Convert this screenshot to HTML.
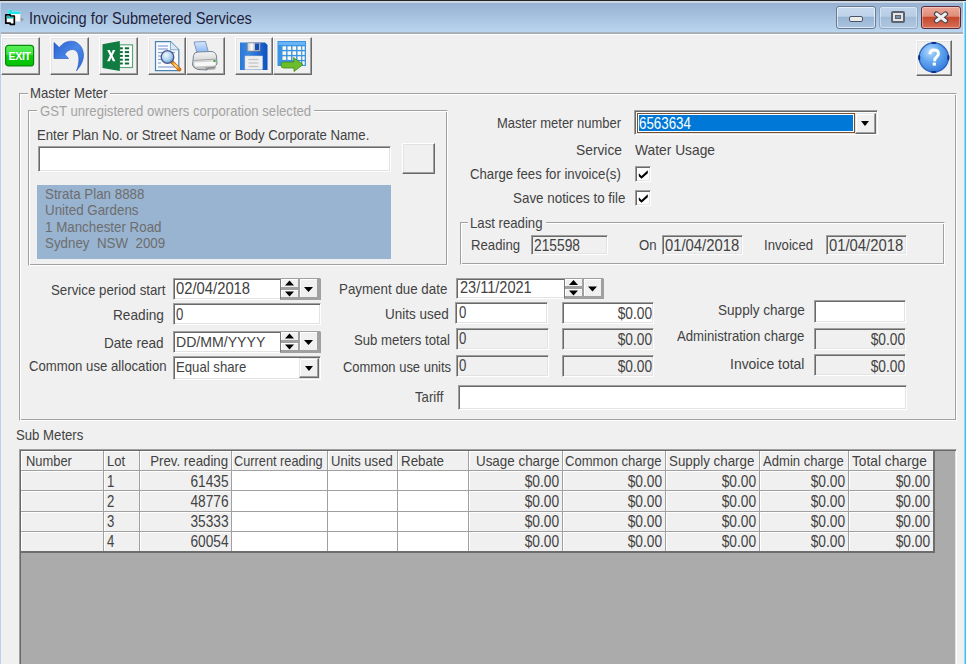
<!DOCTYPE html>
<html><head><meta charset="utf-8">
<style>
*{margin:0;padding:0;box-sizing:border-box}
html,body{width:966px;height:664px;overflow:hidden;background:#f0f0f0;position:relative;font-family:"Liberation Sans",sans-serif}
.a{position:absolute}
.t{position:absolute;margin-left:-1px;white-space:nowrap;font-size:15px;line-height:16px;transform:scaleX(.878);transform-origin:0 0;color:#424242}
.g{color:#6d6d6d}
.btn{position:absolute;width:39px;height:38px;background:#f0f0f0;border-style:solid;border-width:1px;border-color:#fff #696969 #696969 #fff;box-shadow:inset -1px -1px 0 #a0a0a0,inset 1px 1px 0 #e3e3e3}
.sunk{position:absolute;background:#fff;border-style:solid;border-width:1px;border-color:#a0a0a0 #fff #fff #a0a0a0;box-shadow:inset 1px 1px 0 #696969,inset -1px -1px 0 #e3e3e3}
.dis{background:#f0f0f0}
.grp{position:absolute;border-style:solid;border-width:1px;border-color:#a0a0a0 #fff #fff #a0a0a0;box-shadow:inset 1px 1px 0 #fff,inset -1px -1px 0 #a0a0a0}
.cap{background:#f0f0f0;padding:0 2px}
.ddb{position:absolute;width:19px;background:#f0f0f0;border-style:solid;border-width:1px;border-color:#e3e3e3 #696969 #696969 #e3e3e3;box-shadow:inset -1px -1px 0 #a0a0a0,inset 1px 1px 0 #fff}
.ddb:after{content:"";position:absolute;left:4.5px;top:50%;margin-top:-2.5px;border-left:4.5px solid transparent;border-right:4.5px solid transparent;border-top:5px solid #000}
.chk{position:absolute;width:16px;height:16px;background:#fff;border-style:solid;border-width:1px;border-color:#a0a0a0 #fff #fff #a0a0a0;box-shadow:inset 1px 1px 0 #696969,inset -1px -1px 0 #e3e3e3}
.spin{position:absolute;width:19px;height:18px}
.spin:before{content:"";position:absolute;left:0;top:0;width:19px;height:50%;box-sizing:border-box;background:#f0f0f0;border-style:solid;border-width:1px;border-color:#fff #a0a0a0 #a0a0a0 #fff}
.spin:after{content:"";position:absolute;left:0;bottom:0;width:19px;height:50%;box-sizing:border-box;background:#f0f0f0;border-style:solid;border-width:1px;border-color:#fff #a0a0a0 #a0a0a0 #fff}
.ddb2{position:absolute;width:19px;background:#f0f0f0;border-style:solid;border-width:1px;border-color:#fff #a0a0a0 #a0a0a0 #fff}
.r{transform-origin:100% 0}
</style></head><body>

<!-- Title bar -->
<div class="a" style="left:0;top:0;width:966px;height:1px;background:#262626"></div>
<div class="a" style="left:0;top:1px;width:963px;height:2px;background:#cfd8e2"></div>
<div class="a" style="left:0;top:3px;width:963px;height:29px;background:linear-gradient(#97b2d2,#b9d5ef)"></div>
<div class="a" style="left:0;top:32px;width:963px;height:2px;background:linear-gradient(#a7b6c6,#a9a9a9)"></div>
<div class="a" style="left:0;top:34px;width:963px;height:1px;background:#fff"></div>
<div class="a" style="left:0;top:3px;width:1px;height:661px;background:#b9d1ea"></div>
<div class="a" style="left:963px;top:2px;width:1px;height:662px;background:#e6eef6"></div>
<div class="a" style="left:964px;top:2px;width:1px;height:662px;background:#9ed6f2"></div>
<div class="a" style="left:965px;top:2px;width:1px;height:662px;background:#3cc4f0"></div>

<!-- title icon -->
<svg class="a" style="left:0;top:4px" width="28" height="24" viewBox="0 0 28 24">
  <path d="M8.3 5.8 L12 5.8 L12 7.5 L20.3 7.5 L20.3 17.5 L8.3 17.5Z" fill="#fbfbfb"/>
  <path d="M8.3 5.8 L12 5.8 L12 7.5 L20.3 7.5 L20.3 10 L8.3 10 Z" fill="#22e4e8"/>
  <path d="M20.8 13.3 L24 15.5 L20.8 17.8Z" fill="#9a9a9a"/>
  <path d="M5.8 10.8 L10.2 10.8 L10.2 12 L14.3 12 L14.3 20.3 L10.2 20.3 L10.2 19.2 L5.8 19.2 Z" fill="#fff" stroke="#000" stroke-width="1.7" stroke-linejoin="round"/>
  <path d="M6.7 11.7 L9.6 11.7 L9.6 12.9 L13.4 12.9 L13.4 14.4 L6.7 14.4Z" fill="#18b8b8"/>
</svg>
<div class="t" style="left:29.5px;top:10.2px;font-size:16.5px;transform:scaleX(.887);color:#1e1e3c">Invoicing for Submetered Services</div>
<!-- caption buttons -->
<div class="a" style="left:836px;top:6px;width:40px;height:23px;border:1px solid #6a7a8e;border-radius:3px;background:linear-gradient(#c8daed 0%,#bdd2ea 45%,#98b4d2 46%,#a9c4e0 100%);box-shadow:inset 0 0 0 1px rgba(255,255,255,.6)"></div>
<div class="a" style="left:849px;top:16.3px;width:14px;height:6.2px;border:1.4px solid #4a5568;border-radius:2px;background:#ececec"></div>
<div class="a" style="left:879px;top:6px;width:39px;height:23px;border:1px solid #90a8c4;border-radius:3px;background:linear-gradient(#c0d4ea 0%,#b8cee6 45%,#a0bad6 46%,#b0c8e2 100%);box-shadow:inset 0 0 0 1px rgba(255,255,255,.4)"></div>
<div class="a" style="left:891px;top:11px;width:14px;height:12px;border:2px solid #5c6270;border-radius:2px;background:#e4e4e4"></div>
<div class="a" style="left:895px;top:15px;width:6px;height:4px;background:#7890ac;border:1px solid #5c6270"></div>
<div class="a" style="left:921px;top:6px;width:40px;height:23px;border:1px solid #5a2a3a;border-radius:3px;background:linear-gradient(#eca898 0%,#e08c78 45%,#c44428 46%,#d87058 100%);box-shadow:inset 0 0 0 1px rgba(255,255,255,.35)"></div>
<svg class="a" style="left:932px;top:9px" width="18" height="18" viewBox="0 0 18 18">
  <g stroke-linecap="round"><path d="M4.5 5 L13.5 11.8 M13.5 5 L4.5 11.8" stroke="#4a4450" stroke-width="5.2"/>
  <path d="M4.6 5.1 L13.4 11.7 M13.4 5.1 L4.6 11.7" stroke="#f0f0f0" stroke-width="3.1"/></g>
</svg>

<!-- toolbar -->
<div class="btn" style="left:1px;top:37px"></div>
<div class="btn" style="left:50px;top:37px"></div>
<div class="btn" style="left:99px;top:37px"></div>
<div class="btn" style="left:148px;top:37px;width:38px"></div>
<div class="btn" style="left:186px;top:37px"></div>
<div class="btn" style="left:235px;top:37px;width:38px"></div>
<div class="btn" style="left:273px;top:37px"></div>
<div class="btn" style="left:916px;top:40px;width:36px;height:36px"></div>
<!-- EXIT icon -->
<svg class="a" style="left:4px;top:44px" width="32" height="24" viewBox="0 0 32 24">
  <defs><linearGradient id="gx" x1="0" y1="0" x2="0" y2="1"><stop offset="0" stop-color="#58f058"/><stop offset=".45" stop-color="#40e040"/><stop offset=".5" stop-color="#10c810"/><stop offset="1" stop-color="#00c400"/></linearGradient></defs>
  <rect x="1.6" y="1.3" width="28" height="20.6" rx="3" fill="url(#gx)" stroke="#0a8a0a" stroke-width="1.2"/>
  <text x="15.6" y="15.6" text-anchor="middle" font-family="Liberation Sans" font-weight="bold" font-size="10.5" fill="#fff" letter-spacing="-.3">EXIT</text>
</svg>
<!-- undo icon -->
<svg class="a" style="left:50px;top:38px" width="38" height="36" viewBox="0 0 38 36">
  <defs><linearGradient id="gu" x1="0" y1="0" x2="1" y2="1"><stop offset="0" stop-color="#2a60d0"/><stop offset=".5" stop-color="#4a88e8"/><stop offset="1" stop-color="#2a6ad8"/></linearGradient></defs>
  <path d="M4,4.5 L4,20.5 L18.5,20.5 L14.8,16.3 C17.5,11.5 23.5,9.8 26.8,13.5 C29.8,17 29.5,26 26.5,32.8 C31.5,27 34,21 33.4,15.5 C32.6,8 27,3.2 21.5,3.2 C16,3.2 12,6 9.3,9.6 Z" fill="url(#gu)" stroke="#2050b8" stroke-width=".6"/>
</svg>
<!-- excel icon -->
<svg class="a" style="left:99px;top:38px" width="38" height="36" viewBox="0 0 38 36">
  <rect x="20.5" y="6.8" width="13" height="22.7" fill="#fff" stroke="#5aa878" stroke-width="1.2"/>
  <g fill="#0b6e35">
    <rect x="21" y="9.3" width="2.8" height="2"/><rect x="25.8" y="9.3" width="4.3" height="2"/>
    <rect x="21" y="13.1" width="2.8" height="2"/><rect x="25.8" y="13.1" width="4.3" height="2"/>
    <rect x="21" y="16.9" width="2.8" height="2"/><rect x="25.8" y="16.9" width="4.3" height="2"/>
    <rect x="21" y="20.7" width="2.8" height="2"/><rect x="25.8" y="20.7" width="4.3" height="2"/>
    <rect x="21" y="24.5" width="2.8" height="2"/><rect x="25.8" y="24.5" width="4.3" height="2"/>
  </g>
  <path d="M3.5,6.3 L20.8,3 L20.8,33 L3.5,30 Z" fill="#107c41"/>
  <path d="M8.2,12 L10.8,12 L12.3,15.5 L13.8,12 L16.3,12 L13.6,17.6 L16.4,23.3 L13.8,23.3 L12.3,19.7 L10.7,23.3 L8.1,23.3 L10.9,17.6 Z" fill="#fff"/>
</svg>
<!-- preview icon -->
<svg class="a" style="left:148px;top:38px" width="38" height="36" viewBox="0 0 38 36">
  <defs><radialGradient id="gm" cx=".4" cy=".35" r=".7"><stop offset="0" stop-color="#f0f8ff"/><stop offset=".6" stop-color="#a8d0f0"/><stop offset="1" stop-color="#6890c8"/></radialGradient>
  <linearGradient id="gh" x1="0" y1="0" x2="1" y2="1"><stop offset="0" stop-color="#e08010"/><stop offset=".5" stop-color="#ffe080"/><stop offset="1" stop-color="#e07000"/></linearGradient></defs>
  <path d="M7.5,3.7 L22.5,3.7 L30.8,11.8 L30.8,32.6 L7.5,32.6 Z" fill="#f8fbff" stroke="#4a82b0" stroke-width="1.2"/>
  <path d="M22.5,3.7 L22.5,11.8 L30.8,11.8" fill="#dde8f4" stroke="#6a9ac0" stroke-width=".8"/>
  <g stroke="#8aa0d8" stroke-width="1.2"><line x1="10" y1="8" x2="20" y2="8"/><line x1="10" y1="11" x2="20" y2="11"/><line x1="10" y1="14.5" x2="27" y2="14.5"/><line x1="10" y1="18" x2="13" y2="18"/><line x1="10" y1="21.5" x2="13" y2="21.5"/><line x1="10" y1="25" x2="13" y2="25"/><line x1="10" y1="29" x2="27" y2="29"/></g>
  <line x1="24" y1="24" x2="31.5" y2="31.5" stroke="#c05800" stroke-width="3.8" stroke-linecap="round"/>
  <line x1="24" y1="24" x2="31.5" y2="31.5" stroke="url(#gh)" stroke-width="2.4" stroke-linecap="round"/>
  <circle cx="19.5" cy="19" r="6.3" fill="url(#gm)" stroke="#4a5a88" stroke-width="1.3"/>
</svg>
<!-- printer icon -->
<svg class="a" style="left:186px;top:38px" width="38" height="36" viewBox="0 0 38 36">
  <defs><linearGradient id="gp" x1="0" y1="0" x2="0" y2="1"><stop offset="0" stop-color="#f4f4f4"/><stop offset=".5" stop-color="#d8d8d8"/><stop offset="1" stop-color="#bcbcbc"/></linearGradient>
  <linearGradient id="gpa" x1="0" y1="0" x2="0" y2="1"><stop offset="0" stop-color="#d8e8ff"/><stop offset="1" stop-color="#88b4f0"/></linearGradient></defs>
  <path d="M8,4 L19.5,3.5 L22.5,14.5 L11,15 Z" fill="url(#gpa)" stroke="#7890b8" stroke-width=".9"/>
  <path d="M7.5,17.5 Q8,14 12,14 L25,13.5 Q29.5,13.5 30.5,18 L31,26 L28,29.5 L22,30 L21,32 L12,31.5 Q7,30 6.5,27 Z" fill="url(#gp)" stroke="#6a7a8a" stroke-width=".9"/>
  <path d="M7,22.5 L30.5,21" stroke="#a8a8a8" stroke-width="1"/>
  <path d="M8,24.5 L29.5,23.5 L29.5,27.5 L9,28.5Z" fill="#f8f8f8"/>
  <path d="M19,29.5 L30,28.5 L29,31.5 L20,32Z" fill="#888" opacity=".7"/>
  <rect x="27.5" y="22" width="2" height="2" fill="#30a030"/>
</svg>
<!-- floppy icon -->
<svg class="a" style="left:235px;top:38px" width="38" height="36" viewBox="0 0 38 36">
  <defs><linearGradient id="gf" x1="0" y1="0" x2="1" y2="0"><stop offset="0" stop-color="#2a78d8"/><stop offset=".3" stop-color="#3c88e0"/><stop offset="1" stop-color="#0c50c0"/></linearGradient>
  <linearGradient id="gs" x1="0" y1="0" x2="1" y2="0"><stop offset="0" stop-color="#c8c8c8"/><stop offset=".35" stop-color="#ffffff"/><stop offset=".6" stop-color="#b8b8b8"/></linearGradient></defs>
  <path d="M5,4.5 L30,4.5 L32.5,7 L32.5,32 L5,32 Z" fill="url(#gf)"/>
  <rect x="12.5" y="5" width="12.5" height="8" fill="url(#gs)" stroke="#a09080" stroke-width=".6"/>
  <rect x="20" y="5.5" width="4" height="6.5" fill="#1050c0"/>
  <rect x="10" y="18" width="17.5" height="13.5" fill="#f0f0f0" stroke="#d0d0d0" stroke-width=".5"/>
  <g stroke="#c4c4c4" stroke-width="1.3"><line x1="13.5" y1="21.5" x2="23.5" y2="21.5"/><line x1="13.5" y1="25" x2="23.5" y2="25"/><line x1="13.5" y1="28.5" x2="23.5" y2="28.5"/></g>
</svg>
<!-- grid arrow icon -->
<svg class="a" style="left:273px;top:38px" width="38" height="36" viewBox="0 0 38 36">
  <rect x="4.5" y="3" width="28.5" height="25" fill="#3a94e4"/>
  <rect x="5.5" y="4" width="26.5" height="3" fill="#68b4f4"/>
  <g fill="#fdf8ec">
    <rect x="9.5" y="8.3" width="3.6" height="3.6"/><rect x="14.5" y="8.3" width="3.6" height="3.6"/><rect x="19.5" y="8.3" width="3.6" height="3.6"/><rect x="24.5" y="8.3" width="3.6" height="3.6"/><rect x="29.3" y="8.3" width="2.4" height="3.6"/>
    <rect x="9.5" y="13.3" width="3.6" height="3.6"/><rect x="14.5" y="13.3" width="3.6" height="3.6"/><rect x="19.5" y="13.3" width="3.6" height="3.6"/><rect x="24.5" y="13.3" width="3.6" height="3.6"/><rect x="29.3" y="13.3" width="2.4" height="3.6"/>
    <rect x="9.5" y="18.3" width="3.6" height="3.6"/><rect x="14.5" y="18.3" width="3.6" height="3.6"/><rect x="19.5" y="18.3" width="3.6" height="3.6"/><rect x="24.5" y="18.3" width="3.6" height="3.6"/><rect x="29.3" y="18.3" width="2.4" height="3.6"/>
    <rect x="24.5" y="23.3" width="3.6" height="3.6"/><rect x="29.3" y="23.3" width="2.4" height="3.6"/>
  </g>
  <path d="M10.5,24 L21,24 L20.5,19.5 L30,26.5 L21,33.5 L21,30 L10.5,30 Q8,30 8,27 Q8,24 10.5,24Z" fill="#6cbc2c" stroke="#3c8a18" stroke-width=".8"/>
</svg>
<!-- help icon -->
<svg class="a" style="left:916px;top:40px" width="36" height="36" viewBox="0 0 36 36">
  <defs><radialGradient id="gq" cx=".38" cy=".3" r=".8"><stop offset="0" stop-color="#b4dafc"/><stop offset=".45" stop-color="#62a6f0"/><stop offset="1" stop-color="#2c74d8"/></radialGradient></defs>
  <circle cx="17.8" cy="17.5" r="14.6" fill="url(#gq)" stroke="#2c64c0" stroke-width="1.3"/>
  <g fill="#0a2a88"><ellipse cx="17.8" cy="3" rx="2.8" ry="1.1"/><ellipse cx="17.8" cy="32" rx="2.8" ry="1.1"/><ellipse cx="3.2" cy="17.5" rx="1.1" ry="2.8"/><ellipse cx="32.4" cy="17.5" rx="1.1" ry="2.8"/></g>
  <path d="M14 14.2 C14 11 16 9.9 18 9.9 C20.6 9.9 22.4 11.4 22.4 13.8 C22.4 15.9 21 16.9 19.9 17.7 C18.9 18.4 18.6 19.3 18.6 21.2" fill="none" stroke="#fff" stroke-width="3"/>
  <rect x="16.7" y="22.6" width="3.2" height="3" fill="#fff"/>
</svg>

<!-- Master Meter group -->
<div class="grp" style="left:19px;top:93px;width:938px;height:328px"></div>
<div class="a" style="left:28px;top:86px;width:82px;height:16px;background:#f0f0f0"></div>
<div class="t" style="left:31px;top:85px">Master Meter</div>
<div class="grp" style="left:28px;top:110px;width:420px;height:156px"></div>
<div class="a" style="left:37px;top:103px;width:277px;height:16px;background:#f0f0f0"></div>
<div class="t" style="left:41px;top:103px;color:#a3a3a3;transform:scaleX(.875)">GST unregistered owners corporation selected</div>
<div class="t" style="left:38px;top:127px">Enter Plan No. or Street Name or Body Corporate Name.</div>
<div class="sunk" style="left:38px;top:146px;width:353px;height:26px"></div>
<div class="btn" style="left:402px;top:143px;width:33px;height:31px"></div>
<div class="a" style="left:37px;top:185px;width:354px;height:74px;background:#99b4d1"></div>
<div class="t g" style="left:46px;top:186px;line-height:16.3px;transform:scaleX(.89)">Strata Plan 8888<br>United Gardens<br>1 Manchester Road<br>Sydney&nbsp; NSW&nbsp; 2009</div>

<div class="t" style="left:498px;top:115px;transform:scaleX(.865)">Master meter number</div>
<div class="sunk" style="left:634px;top:110px;width:244px;height:25px"></div>
<svg class="a" style="left:637px;top:113px" width="218" height="20"><rect x=".5" y=".5" width="217" height="19" fill="none" stroke="#f0a060"/><rect x=".5" y=".5" width="217" height="19" fill="none" stroke="#000" stroke-dasharray="1 1"/></svg>
<div class="a" style="left:639px;top:115px;width:214px;height:16px;background:#0078d7"></div>
<div class="t" style="left:640px;top:115.5px;color:#fff;font-size:16px;transform:scaleX(.834)">6563634</div>
<div class="ddb" style="left:855px;top:113px;height:21px;width:21px"></div>

<div class="t" style="left:577px;top:142px;transform:scaleX(.92)">Service</div>
<div class="t" style="left:635.5px;top:142px;transform:scaleX(.92)">Water Usage</div>
<div class="t" style="left:471px;top:166px">Charge fees for invoice(s)</div>
<div class="chk" style="left:635px;top:166px"></div>
<div class="t" style="left:514px;top:190px;transform:scaleX(.893)">Save notices to file</div>
<div class="chk" style="left:635px;top:190px"></div>
<svg class="a" style="left:635px;top:166px" width="16" height="16" viewBox="0 0 16 16"><path d="M3.8 7.2 L6.5 9.9 L12.8 4.2 L12.8 7.3 L6.5 12.8 L3.8 10.3Z" fill="#000"/></svg>
<svg class="a" style="left:635px;top:190px" width="16" height="16" viewBox="0 0 16 16"><path d="M3.8 7.2 L6.5 9.9 L12.8 4.2 L12.8 7.3 L6.5 12.8 L3.8 10.3Z" fill="#000"/></svg>

<div class="grp" style="left:460px;top:222px;width:485px;height:43px"></div>
<div class="a" style="left:468px;top:215px;width:78px;height:16px;background:#f0f0f0"></div>
<div class="t" style="left:471px;top:214.5px">Last reading</div>
<div class="t" style="left:472px;top:236.6px">Reading</div>
<div class="sunk dis" style="left:531px;top:235px;width:77px;height:20px"></div>
<div class="t" style="left:534.5px;top:238px;font-size:16px;transform:scaleX(.862)">215598</div>
<div class="t" style="left:640px;top:236.6px">On</div>
<div class="sunk dis" style="left:662px;top:235px;width:81px;height:20px"></div>
<div class="t" style="left:666px;top:238px;font-size:16px;transform:scaleX(.927)">01/04/2018</div>
<div class="t" style="left:765px;top:236.6px">Invoiced</div>
<div class="sunk dis" style="left:826px;top:235px;width:81px;height:20px"></div>
<div class="t" style="left:829.5px;top:238px;font-size:16px;transform:scaleX(.927)">01/04/2018</div>

<!-- form fields -->
<div class="t" style="left:52px;top:282px;transform:scaleX(.886)">Service period start</div>
<div class="sunk" style="left:173px;top:278px;width:148px;height:22px"></div>
<div class="t" style="left:176.5px;top:280.5px;font-size:16px;transform:scaleX(.925)">02/04/2018</div>
<div class="a" style="left:280px;top:279px;width:41px;height:21px;background:#a0a0a0"></div>
<div class="a" style="left:280px;top:279px;width:1px;height:20px;background:#7a7a7a"></div>
<div class="a" style="left:281px;top:279px;width:17px;height:8px;background:#f0f0f0;border-top:1px solid #fff;border-left:1px solid #fff"></div>
<div class="a" style="left:281px;top:290px;width:17px;height:7px;background:#f0f0f0;border-top:1px solid #fff;border-left:1px solid #fff"></div>
<div class="a" style="left:300px;top:279px;width:17px;height:18px;background:#f0f0f0;border-top:1px solid #fff;border-left:1px solid #fff"></div>
<svg class="a" style="left:0;top:0;overflow:visible" width="1" height="1"><path d="M285.0 285.5 L289.5 280.5 L294.0 285.5Z M285.0 291.5 L289.5 296.5 L294.0 291.5Z M304.0 287.0 L313.0 287.0 L308.5 292.0Z" fill="#000"/></svg>

<div class="t" style="left:113.5px;top:307px;transform:scaleX(.91)">Reading</div>
<div class="sunk" style="left:173px;top:303px;width:148px;height:22px"></div>
<div class="t" style="left:176.5px;top:306.5px;font-size:16px;transform:scaleX(.823)">0</div>

<div class="t" style="left:105px;top:334.5px;transform:scaleX(.905)">Date read</div>
<div class="sunk" style="left:173px;top:331px;width:148px;height:22px"></div>
<div class="t" style="left:176.5px;top:334px;transform:scaleX(.94)">DD/MM/YYYY</div>
<div class="a" style="left:280px;top:332px;width:41px;height:21px;background:#a0a0a0"></div>
<div class="a" style="left:280px;top:332px;width:1px;height:20px;background:#7a7a7a"></div>
<div class="a" style="left:281px;top:332px;width:17px;height:8px;background:#f0f0f0;border-top:1px solid #fff;border-left:1px solid #fff"></div>
<div class="a" style="left:281px;top:343px;width:17px;height:7px;background:#f0f0f0;border-top:1px solid #fff;border-left:1px solid #fff"></div>
<div class="a" style="left:300px;top:332px;width:17px;height:18px;background:#f0f0f0;border-top:1px solid #fff;border-left:1px solid #fff"></div>
<svg class="a" style="left:0;top:0;overflow:visible" width="1" height="1"><path d="M285.0 338.5 L289.5 333.5 L294.0 338.5Z M285.0 344.5 L289.5 349.5 L294.0 344.5Z M304.0 340.0 L313.0 340.0 L308.5 345.0Z" fill="#000"/></svg>

<div class="t" style="left:29.5px;top:358px">Common use allocation</div>
<div class="sunk" style="left:173px;top:356px;width:148px;height:24px"></div>
<div class="t" style="left:176.5px;top:358.5px">Equal share</div>
<div class="ddb" style="left:299px;top:358px;height:20px;width:20px"></div>

<div class="t" style="left:340px;top:280.7px;transform:scaleX(.89)">Payment due date</div>
<div class="sunk" style="left:456px;top:278px;width:148px;height:21px"></div>
<div class="t" style="left:460.5px;top:280px;font-size:16px;transform:scaleX(.909)">23/11/2021</div>
<div class="a" style="left:564px;top:279px;width:40px;height:20px;background:#a0a0a0"></div>
<div class="a" style="left:564px;top:279px;width:1px;height:19px;background:#7a7a7a"></div>
<div class="a" style="left:565px;top:279px;width:17px;height:7px;background:#f0f0f0;border-top:1px solid #fff;border-left:1px solid #fff"></div>
<div class="a" style="left:565px;top:289px;width:17px;height:7px;background:#f0f0f0;border-top:1px solid #fff;border-left:1px solid #fff"></div>
<div class="a" style="left:584px;top:279px;width:17px;height:17px;background:#f0f0f0;border-top:1px solid #fff;border-left:1px solid #fff"></div>
<svg class="a" style="left:0;top:0;overflow:visible" width="1" height="1"><path d="M569.0 285.0 L573.5 280.0 L578.0 285.0Z M569.0 290.5 L573.5 295.5 L578.0 290.5Z M588.0 286.5 L597.0 286.5 L592.5 291.5Z" fill="#000"/></svg>

<div class="t" style="left:386px;top:305.7px;transform:scaleX(.9)">Units used</div>
<div class="sunk" style="left:455px;top:302px;width:93px;height:22px"></div>
<div class="t" style="left:460px;top:305px;font-size:16px;transform:scaleX(.823)">0</div>
<div class="sunk" style="left:562px;top:302px;width:92px;height:22px"></div>
<div class="t r" style="right:313.5px;top:306px;font-size:16px;transform:scaleX(.858)">$0.00</div>

<div class="t" style="left:355px;top:332px">Sub meters total</div>
<div class="sunk dis" style="left:456px;top:328px;width:93px;height:22px"></div>
<div class="t" style="left:460px;top:331px;font-size:16px;transform:scaleX(.823)">0</div>
<div class="sunk dis" style="left:562px;top:328px;width:92px;height:22px"></div>
<div class="t r" style="right:313.5px;top:332px;font-size:16px;transform:scaleX(.858)">$0.00</div>

<div class="t" style="left:344px;top:358.6px;transform:scaleX(.864)">Common use units</div>
<div class="sunk dis" style="left:456px;top:355px;width:93px;height:22px"></div>
<div class="t" style="left:460px;top:358px;font-size:16px;transform:scaleX(.823)">0</div>
<div class="sunk dis" style="left:562px;top:355px;width:92px;height:22px"></div>
<div class="t r" style="right:313.5px;top:359px;font-size:16px;transform:scaleX(.858)">$0.00</div>

<div class="t" style="left:415.5px;top:388.6px">Tariff</div>
<div class="sunk" style="left:458px;top:385px;width:449px;height:25px"></div>

<div class="t" style="left:719.4px;top:302px;transform:scaleX(.905)">Supply charge</div>
<div class="sunk" style="left:814px;top:300px;width:92px;height:23px"></div>
<div class="t" style="left:678px;top:328px">Administration charge</div>
<div class="sunk dis" style="left:814px;top:328px;width:92px;height:22px"></div>
<div class="t r" style="right:61px;top:332px;font-size:16px;transform:scaleX(.858)">$0.00</div>
<div class="t" style="left:730.6px;top:356.2px;transform:scaleX(.93)">Invoice total</div>
<div class="sunk dis" style="left:814px;top:354px;width:92px;height:22px"></div>
<div class="t r" style="right:61px;top:359px;font-size:16px;transform:scaleX(.858)">$0.00</div>

<!-- Sub Meters -->
<div class="t" style="left:17px;top:427px">Sub Meters</div>
<div class="a" style="left:19px;top:449px;width:938px;height:230px;background:#ababab;border-style:solid;border-width:1px;border-color:#a0a0a0 #fff #fff #a0a0a0;box-shadow:inset 1px 1px 0 #696969,inset -1px -1px 0 #e3e3e3"></div>
<div class="a" style="left:21px;top:451px;width:82px;height:19px;background:#f0f0f0;box-shadow:inset 1px 1px 0 #fff"></div>
<div class="a" style="left:21px;top:471px;width:82px;height:19px;background:#f0f0f0;box-shadow:inset 1px 1px 0 #fff"></div>
<div class="a" style="left:21px;top:491px;width:82px;height:20px;background:#f0f0f0;box-shadow:inset 1px 1px 0 #fff"></div>
<div class="a" style="left:21px;top:512px;width:82px;height:19px;background:#f0f0f0;box-shadow:inset 1px 1px 0 #fff"></div>
<div class="a" style="left:21px;top:532px;width:82px;height:19px;background:#f0f0f0;box-shadow:inset 1px 1px 0 #fff"></div>
<div class="a" style="left:104px;top:451px;width:35px;height:19px;background:#f0f0f0;box-shadow:inset 1px 1px 0 #fff"></div>
<div class="a" style="left:104px;top:471px;width:35px;height:19px;background:#f0f0f0;box-shadow:inset 1px 1px 0 #fff"></div>
<div class="a" style="left:104px;top:491px;width:35px;height:20px;background:#f0f0f0;box-shadow:inset 1px 1px 0 #fff"></div>
<div class="a" style="left:104px;top:512px;width:35px;height:19px;background:#f0f0f0;box-shadow:inset 1px 1px 0 #fff"></div>
<div class="a" style="left:104px;top:532px;width:35px;height:19px;background:#f0f0f0;box-shadow:inset 1px 1px 0 #fff"></div>
<div class="a" style="left:140px;top:451px;width:91px;height:19px;background:#f0f0f0;box-shadow:inset 1px 1px 0 #fff"></div>
<div class="a" style="left:140px;top:471px;width:91px;height:19px;background:#f0f0f0;box-shadow:inset 1px 1px 0 #fff"></div>
<div class="a" style="left:140px;top:491px;width:91px;height:20px;background:#f0f0f0;box-shadow:inset 1px 1px 0 #fff"></div>
<div class="a" style="left:140px;top:512px;width:91px;height:19px;background:#f0f0f0;box-shadow:inset 1px 1px 0 #fff"></div>
<div class="a" style="left:140px;top:532px;width:91px;height:19px;background:#f0f0f0;box-shadow:inset 1px 1px 0 #fff"></div>
<div class="a" style="left:232px;top:451px;width:95px;height:19px;background:#f0f0f0;box-shadow:inset 1px 1px 0 #fff"></div>
<div class="a" style="left:232px;top:471px;width:95px;height:19px;background:#fff"></div>
<div class="a" style="left:232px;top:491px;width:95px;height:20px;background:#fff"></div>
<div class="a" style="left:232px;top:512px;width:95px;height:19px;background:#fff"></div>
<div class="a" style="left:232px;top:532px;width:95px;height:19px;background:#fff"></div>
<div class="a" style="left:328px;top:451px;width:69px;height:19px;background:#f0f0f0;box-shadow:inset 1px 1px 0 #fff"></div>
<div class="a" style="left:328px;top:471px;width:69px;height:19px;background:#fff"></div>
<div class="a" style="left:328px;top:491px;width:69px;height:20px;background:#fff"></div>
<div class="a" style="left:328px;top:512px;width:69px;height:19px;background:#fff"></div>
<div class="a" style="left:328px;top:532px;width:69px;height:19px;background:#fff"></div>
<div class="a" style="left:398px;top:451px;width:70px;height:19px;background:#f0f0f0;box-shadow:inset 1px 1px 0 #fff"></div>
<div class="a" style="left:398px;top:471px;width:70px;height:19px;background:#fff"></div>
<div class="a" style="left:398px;top:491px;width:70px;height:20px;background:#fff"></div>
<div class="a" style="left:398px;top:512px;width:70px;height:19px;background:#fff"></div>
<div class="a" style="left:398px;top:532px;width:70px;height:19px;background:#fff"></div>
<div class="a" style="left:469px;top:451px;width:93px;height:19px;background:#f0f0f0;box-shadow:inset 1px 1px 0 #fff"></div>
<div class="a" style="left:469px;top:471px;width:93px;height:19px;background:#f0f0f0;box-shadow:inset 1px 1px 0 #fff"></div>
<div class="a" style="left:469px;top:491px;width:93px;height:20px;background:#f0f0f0;box-shadow:inset 1px 1px 0 #fff"></div>
<div class="a" style="left:469px;top:512px;width:93px;height:19px;background:#f0f0f0;box-shadow:inset 1px 1px 0 #fff"></div>
<div class="a" style="left:469px;top:532px;width:93px;height:19px;background:#f0f0f0;box-shadow:inset 1px 1px 0 #fff"></div>
<div class="a" style="left:563px;top:451px;width:102px;height:19px;background:#f0f0f0;box-shadow:inset 1px 1px 0 #fff"></div>
<div class="a" style="left:563px;top:471px;width:102px;height:19px;background:#f0f0f0;box-shadow:inset 1px 1px 0 #fff"></div>
<div class="a" style="left:563px;top:491px;width:102px;height:20px;background:#f0f0f0;box-shadow:inset 1px 1px 0 #fff"></div>
<div class="a" style="left:563px;top:512px;width:102px;height:19px;background:#f0f0f0;box-shadow:inset 1px 1px 0 #fff"></div>
<div class="a" style="left:563px;top:532px;width:102px;height:19px;background:#f0f0f0;box-shadow:inset 1px 1px 0 #fff"></div>
<div class="a" style="left:666px;top:451px;width:93px;height:19px;background:#f0f0f0;box-shadow:inset 1px 1px 0 #fff"></div>
<div class="a" style="left:666px;top:471px;width:93px;height:19px;background:#f0f0f0;box-shadow:inset 1px 1px 0 #fff"></div>
<div class="a" style="left:666px;top:491px;width:93px;height:20px;background:#f0f0f0;box-shadow:inset 1px 1px 0 #fff"></div>
<div class="a" style="left:666px;top:512px;width:93px;height:19px;background:#f0f0f0;box-shadow:inset 1px 1px 0 #fff"></div>
<div class="a" style="left:666px;top:532px;width:93px;height:19px;background:#f0f0f0;box-shadow:inset 1px 1px 0 #fff"></div>
<div class="a" style="left:760px;top:451px;width:88px;height:19px;background:#f0f0f0;box-shadow:inset 1px 1px 0 #fff"></div>
<div class="a" style="left:760px;top:471px;width:88px;height:19px;background:#f0f0f0;box-shadow:inset 1px 1px 0 #fff"></div>
<div class="a" style="left:760px;top:491px;width:88px;height:20px;background:#f0f0f0;box-shadow:inset 1px 1px 0 #fff"></div>
<div class="a" style="left:760px;top:512px;width:88px;height:19px;background:#f0f0f0;box-shadow:inset 1px 1px 0 #fff"></div>
<div class="a" style="left:760px;top:532px;width:88px;height:19px;background:#f0f0f0;box-shadow:inset 1px 1px 0 #fff"></div>
<div class="a" style="left:849px;top:451px;width:84px;height:19px;background:#f0f0f0;box-shadow:inset 1px 1px 0 #fff"></div>
<div class="a" style="left:849px;top:471px;width:84px;height:19px;background:#f0f0f0;box-shadow:inset 1px 1px 0 #fff"></div>
<div class="a" style="left:849px;top:491px;width:84px;height:20px;background:#f0f0f0;box-shadow:inset 1px 1px 0 #fff"></div>
<div class="a" style="left:849px;top:512px;width:84px;height:19px;background:#f0f0f0;box-shadow:inset 1px 1px 0 #fff"></div>
<div class="a" style="left:849px;top:532px;width:84px;height:19px;background:#f0f0f0;box-shadow:inset 1px 1px 0 #fff"></div>
<div class="a" style="left:103px;top:451px;width:1px;height:100px;background:#a0a0a0"></div>
<div class="a" style="left:139px;top:451px;width:1px;height:100px;background:#a0a0a0"></div>
<div class="a" style="left:231px;top:451px;width:1px;height:100px;background:#a0a0a0"></div>
<div class="a" style="left:327px;top:451px;width:1px;height:100px;background:#a0a0a0"></div>
<div class="a" style="left:397px;top:451px;width:1px;height:100px;background:#a0a0a0"></div>
<div class="a" style="left:468px;top:451px;width:1px;height:100px;background:#a0a0a0"></div>
<div class="a" style="left:562px;top:451px;width:1px;height:100px;background:#a0a0a0"></div>
<div class="a" style="left:665px;top:451px;width:1px;height:100px;background:#a0a0a0"></div>
<div class="a" style="left:759px;top:451px;width:1px;height:100px;background:#a0a0a0"></div>
<div class="a" style="left:848px;top:451px;width:1px;height:100px;background:#a0a0a0"></div>
<div class="a" style="left:933px;top:451px;width:2px;height:102px;background:#6d6d6d"></div>
<div class="a" style="left:21px;top:470px;width:912px;height:1px;background:#a0a0a0"></div>
<div class="a" style="left:21px;top:490px;width:912px;height:1px;background:#a0a0a0"></div>
<div class="a" style="left:21px;top:511px;width:912px;height:1px;background:#a0a0a0"></div>
<div class="a" style="left:21px;top:531px;width:912px;height:1px;background:#a0a0a0"></div>
<div class="a" style="left:21px;top:551px;width:914px;height:2px;background:#6d6d6d"></div>
<div class="t" style="left:26.8px;top:452.7px;transform:scaleX(0.86)">Number</div>
<div class="t" style="left:108.4px;top:452.7px;transform:scaleX(0.87)">Lot</div>
<div class="t r" style="right:738px;top:452.7px;transform:scaleX(0.884)">Prev. reading</div>
<div class="t" style="left:234.8px;top:452.7px;transform:scaleX(0.85)">Current reading</div>
<div class="t" style="left:331.7px;top:452.7px;transform:scaleX(0.87)">Units used</div>
<div class="t" style="left:401.7px;top:452.7px;transform:scaleX(0.89)">Rebate</div>
<div class="t r" style="right:406.70000000000005px;top:452.7px;transform:scaleX(0.893)">Usage charge</div>
<div class="t" style="left:566.3px;top:452.7px;transform:scaleX(0.87)">Common charge</div>
<div class="t" style="left:670px;top:452.7px;transform:scaleX(0.89)">Supply charge</div>
<div class="t" style="left:763.9px;top:452.7px;transform:scaleX(0.872)">Admin charge</div>
<div class="t" style="left:853px;top:452.7px;transform:scaleX(0.915)">Total charge</div>
<div class="t" style="left:108.4px;top:473.9px;font-size:16px;transform:scaleX(.823)">1</div>
<div class="t r" style="right:738px;top:473.9px;font-size:16px;transform:scaleX(.855)">61435</div>
<div class="t r" style="right:406.79999999999995px;top:473.9px;font-size:16px;transform:scaleX(.858)">$0.00</div>
<div class="t r" style="right:303.79999999999995px;top:473.9px;font-size:16px;transform:scaleX(.858)">$0.00</div>
<div class="t r" style="right:209.79999999999995px;top:473.9px;font-size:16px;transform:scaleX(.858)">$0.00</div>
<div class="t r" style="right:120.79999999999995px;top:473.9px;font-size:16px;transform:scaleX(.858)">$0.00</div>
<div class="t r" style="right:35.799999999999955px;top:473.9px;font-size:16px;transform:scaleX(.858)">$0.00</div>
<div class="t" style="left:108.4px;top:493.8px;font-size:16px;transform:scaleX(.823)">2</div>
<div class="t r" style="right:738px;top:493.8px;font-size:16px;transform:scaleX(.855)">48776</div>
<div class="t r" style="right:406.79999999999995px;top:493.8px;font-size:16px;transform:scaleX(.858)">$0.00</div>
<div class="t r" style="right:303.79999999999995px;top:493.8px;font-size:16px;transform:scaleX(.858)">$0.00</div>
<div class="t r" style="right:209.79999999999995px;top:493.8px;font-size:16px;transform:scaleX(.858)">$0.00</div>
<div class="t r" style="right:120.79999999999995px;top:493.8px;font-size:16px;transform:scaleX(.858)">$0.00</div>
<div class="t r" style="right:35.799999999999955px;top:493.8px;font-size:16px;transform:scaleX(.858)">$0.00</div>
<div class="t" style="left:108.4px;top:513.8px;font-size:16px;transform:scaleX(.823)">3</div>
<div class="t r" style="right:738px;top:513.8px;font-size:16px;transform:scaleX(.855)">35333</div>
<div class="t r" style="right:406.79999999999995px;top:513.8px;font-size:16px;transform:scaleX(.858)">$0.00</div>
<div class="t r" style="right:303.79999999999995px;top:513.8px;font-size:16px;transform:scaleX(.858)">$0.00</div>
<div class="t r" style="right:209.79999999999995px;top:513.8px;font-size:16px;transform:scaleX(.858)">$0.00</div>
<div class="t r" style="right:120.79999999999995px;top:513.8px;font-size:16px;transform:scaleX(.858)">$0.00</div>
<div class="t r" style="right:35.799999999999955px;top:513.8px;font-size:16px;transform:scaleX(.858)">$0.00</div>
<div class="t" style="left:108.4px;top:533.8px;font-size:16px;transform:scaleX(.823)">4</div>
<div class="t r" style="right:738px;top:533.8px;font-size:16px;transform:scaleX(.855)">60054</div>
<div class="t r" style="right:406.79999999999995px;top:533.8px;font-size:16px;transform:scaleX(.858)">$0.00</div>
<div class="t r" style="right:303.79999999999995px;top:533.8px;font-size:16px;transform:scaleX(.858)">$0.00</div>
<div class="t r" style="right:209.79999999999995px;top:533.8px;font-size:16px;transform:scaleX(.858)">$0.00</div>
<div class="t r" style="right:120.79999999999995px;top:533.8px;font-size:16px;transform:scaleX(.858)">$0.00</div>
<div class="t r" style="right:35.799999999999955px;top:533.8px;font-size:16px;transform:scaleX(.858)">$0.00</div>
</body></html>
